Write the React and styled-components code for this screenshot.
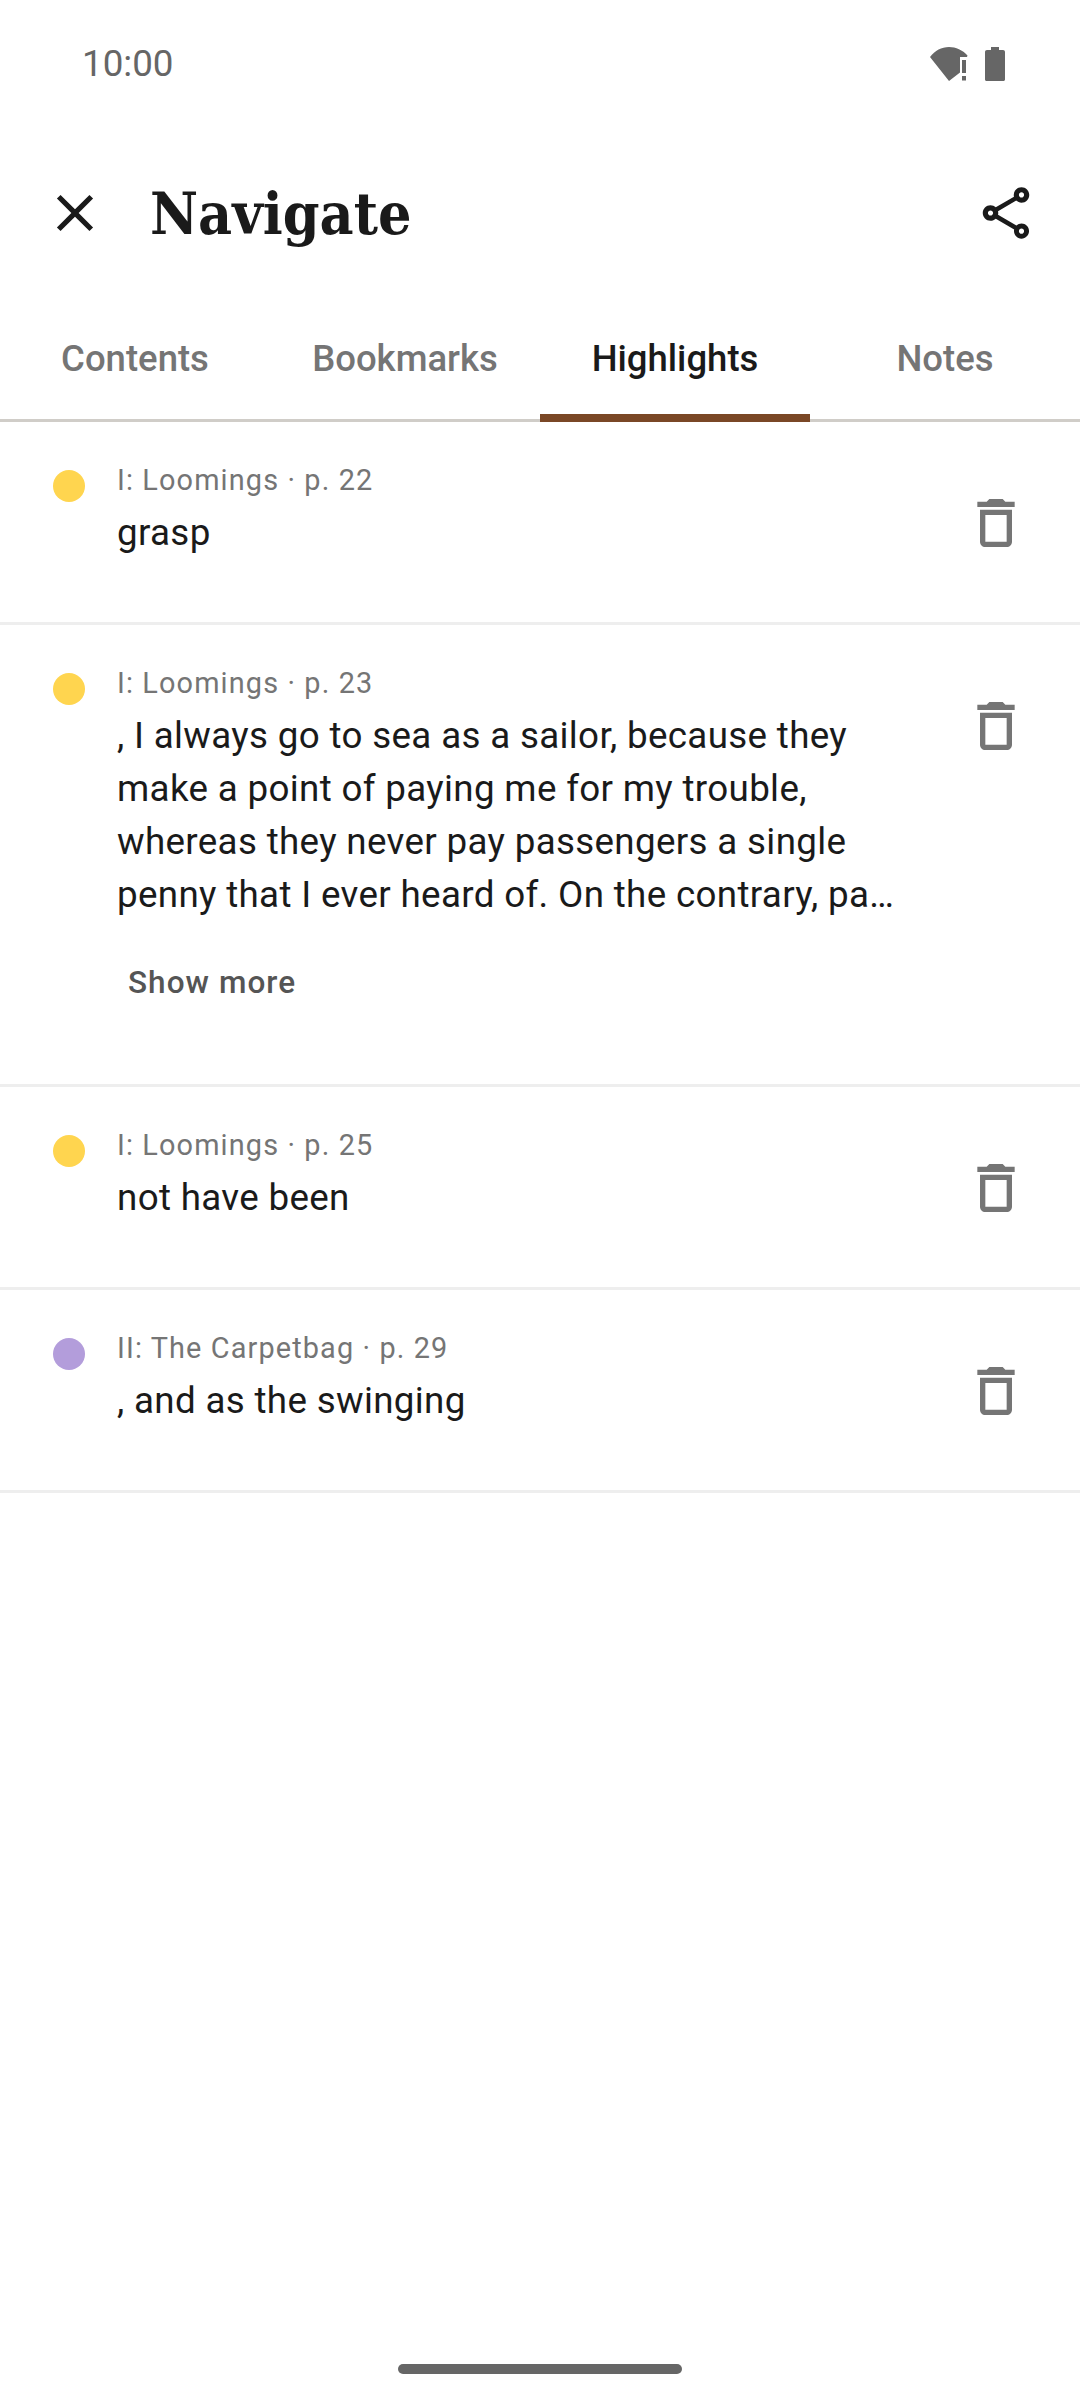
import React from 'react';
import styled, { createGlobalStyle } from 'styled-components';

const GlobalStyle = createGlobalStyle`
    html, body {
        margin: 0;
        padding: 0;
        background: #fff;
    }
    * {
        box-sizing: border-box;
    }
`;

const Screen = styled.div`
    width: 1080px;
    height: 2400px;
    display: flex;
    flex-direction: column;
    background: #fff;
    font-family: Roboto, "Liberation Sans", sans-serif;
    overflow: hidden;
`;

const StatusBar = styled.div`
    height: 127px;
    padding: 0 75px 0 82px;
    display: flex;
    align-items: center;
    justify-content: space-between;
    color: #666;
`;

const Clock = styled.span`
    margin-top: 2px;
    font-size: 36.75px;
    line-height: 1;
`;

const StatusIcons = styled.div`
    display: flex;
    align-items: center;
    gap: 17px;
`;

const Header = styled.header`
    height: 172px;
    padding: 0 43px 0 44px;
    display: flex;
    align-items: center;
    color: #1a1a1a;
`;

const Title = styled.h1`
    flex: 1;
    margin: 2px 0 0 44px;
    font-family: "DejaVu Serif", "Liberation Serif", serif;
    font-stretch: condensed;
    font-weight: 700;
    font-size: 58.5px;
    line-height: 1;
`;

const HeaderIcon = styled.svg`
    width: 62px;
    height: 62px;
    fill: currentColor;
    flex: none;
`;

const Tabs = styled.nav`
    height: 123px;
    display: grid;
    grid-template-columns: repeat(4, 270px);
    border-bottom: 3px solid #d0cdc8;
`;

const Tab = styled.div`
    position: relative;
    display: flex;
    justify-content: center;
    padding-top: 38px;
    font-size: 36.5px;
    line-height: 44px;
    font-weight: 500;
    color: ${props => (props.$active ? '#1a1a1a' : '#757575')};

    ${props => props.$active && `
        &::after {
            content: '';
            position: absolute;
            left: 0;
            right: 0;
            bottom: -3px;
            height: 8px;
            background: #7a4726;
        }
    `}
`;

const Row = styled.article`
    display: flex;
    align-items: flex-start;
    min-height: 203px;
    padding: 0 52px 0 53px;
    border-bottom: 3px solid #eeeeee;
`;

const Dot = styled.span`
    flex: none;
    width: 32px;
    height: 32px;
    margin-top: 48px;
    border-radius: 50%;
    background: ${props => props.$color};
`;

const Body = styled.div`
    flex: 1;
    min-width: 0;
    margin-left: 32px;
    padding-top: 38px;
`;

const Meta = styled.div`
    font-size: 28.875px;
    line-height: 40px;
    letter-spacing: 1.12px;
    color: #757575;
`;

const Excerpt = styled.p`
    margin: 6px 0 0;
    width: 790px;
    font-size: 36.75px;
    line-height: 53px;
    letter-spacing: 0.33px;
    color: #1a1a1a;
`;

const ShowMore = styled.button`
    display: block;
    margin: 42px 0 81px 11px;
    padding: 0;
    border: 0;
    background: none;
    font-family: inherit;
    font-size: 31.5px;
    line-height: 40px;
    font-weight: 500;
    letter-spacing: 1.05px;
    color: #555;
`;

const TrashIcon = styled.svg`
    flex: none;
    width: 64px;
    height: 64px;
    margin-top: 69px;
    fill: #757575;
`;

const HomeHandle = styled.div`
    width: 284px;
    height: 10px;
    margin: auto auto 26px;
    border-radius: 5px;
    background: #666;
`;

const rows = [
    { id: 1, color: '#ffd54f', meta: 'I: Loomings · p. 22', text: 'grasp' },
    {
        id: 2,
        color: '#ffd54f',
        meta: 'I: Loomings · p. 23',
        text: ', I always go to sea as a sailor, because they make a point of paying me for my trouble, whereas they never pay passengers a single penny that I ever heard of. On the contrary, pa…',
        more: true
    },
    { id: 3, color: '#ffd54f', meta: 'I: Loomings · p. 25', text: 'not have been' },
    { id: 4, color: '#b39ddb', meta: 'II: The Carpetbag · p. 29', text: ', and as the swinging' }
];

const tabs = ['Contents', 'Bookmarks', 'Highlights', 'Notes'];

export default function App() {
    return (
        <Screen>
            <GlobalStyle />
            <StatusBar>
                <Clock>10:00</Clock>
                <StatusIcons>
                    <svg width="38" height="35" viewBox="0 0 38 35" fill="#666">
                        <path d="M0 11C5 4.500 11.500 1 19 1c7 0 13.500 3 18.500 8.500l-.5 1.500h-7v15.500L19 35z" />
                        <rect x="32" y="14" width="4" height="13" />
                        <rect x="32" y="30" width="4" height="4.500" />
                    </svg>
                    <svg width="20" height="34" viewBox="0 0 20 34" fill="#666">
                        <path d="M6 0h8v3h4c1.200 0 2 .8 2 2v27.500c0 .8-.7 1.500-1.500 1.500h-17C.7 34 0 33.300 0 32.500V5c0-1.200.8-2 2-2h4z" />
                    </svg>
                </StatusIcons>
            </StatusBar>
            <Header>
                <HeaderIcon viewBox="0 0 24 24">
                    <path d="M19 6.410 17.590 5 12 10.590 6.410 5 5 6.410 10.590 12 5 17.590 6.410 19 12 13.410 17.590 19 19 17.590 13.410 12z" />
                </HeaderIcon>
                <Title>Navigate</Title>
                <HeaderIcon viewBox="0 0 24 24">
                    <path d="M18 16.080c-.76 0-1.440.3-1.960.77L8.910 12.700c.05-.23.09-.46.09-.7s-.04-.47-.09-.7l7.050-4.110c.54.5 1.250.81 2.040.81 1.660 0 3-1.340 3-3s-1.340-3-3-3-3 1.340-3 3c0 .24.04.47.09.7L8.040 9.810C7.500 9.310 6.790 9 6 9c-1.660 0-3 1.340-3 3s1.340 3 3 3c.79 0 1.500-.31 2.040-.81l7.120 4.160c-.05.21-.08.43-.08.65 0 1.610 1.310 2.920 2.920 2.920s2.920-1.310 2.920-2.920c0-1.610-1.310-2.920-2.920-2.920zM18 4c.55 0 1 .45 1 1s-.45 1-1 1-1-.45-1-1 .45-1 1-1zM6 13c-.55 0-1-.45-1-1s.45-1 1-1 1 .45 1 1-.45 1-1 1zm12 7.020c-.55 0-1-.45-1-1s.45-1 1-1 1 .45 1 1-.45 1-1 1z" />
                </HeaderIcon>
            </Header>
            <Tabs>
                {tabs.map(tab => (
                    <Tab key={tab} $active={tab === 'Highlights'}>{tab}</Tab>
                ))}
            </Tabs>
            {rows.map(row => (
                <Row key={row.id}>
                    <Dot $color={row.color} />
                    <Body>
                        <Meta>{row.meta}</Meta>
                        <Excerpt>{row.text}</Excerpt>
                        {row.more && <ShowMore>Show more</ShowMore>}
                    </Body>
                    <TrashIcon viewBox="0 0 24 24">
                        <path d="M6 19c0 1.100.9 2 2 2h8c1.100 0 2-.9 2-2V7H6v12zM8 9h8v10H8V9zm7.500-5l-1-1h-5l-1 1H5v2h14V4z" />
                    </TrashIcon>
                </Row>
            ))}
            <HomeHandle />
        </Screen>
    );
}
